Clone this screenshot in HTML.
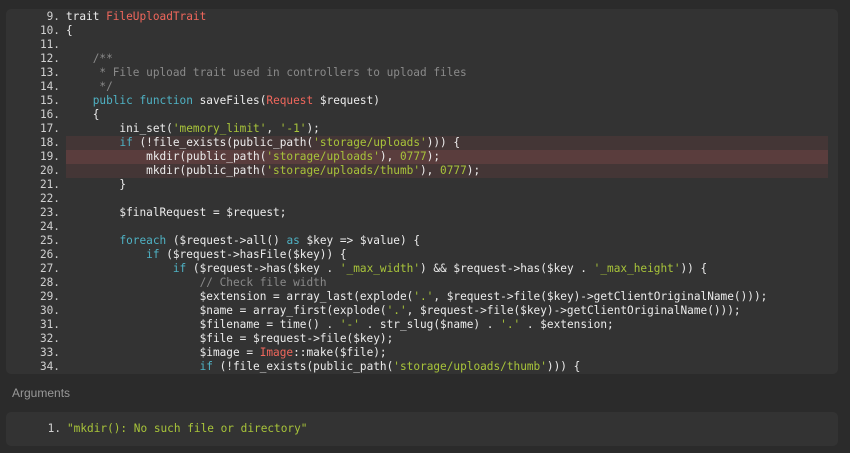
<!DOCTYPE html>
<html><head><style>
body{margin:0;width:850px;height:453px;background:#2b2b2b;overflow:hidden;font-family:"DejaVu Sans Mono",monospace;font-size:11.1px;color:#ececec}
.box{position:absolute;left:6px;top:9px;width:832px;height:365px;background:#333;border-radius:5px;overflow:hidden}
.l{position:absolute;left:0;height:14px;line-height:14px;white-space:pre;width:832px}
.n{position:absolute;left:0;width:54px;text-align:right;color:#d0d0d0}
.c{position:absolute;left:60px;width:762px;height:14px}
.h1 .c{background:#443636}.h2 .c{background:#5a3d3d}
.k{color:#4fb2c4}.s{color:#a8c43a}.t{color:#f0675c}.m{color:#8a8a8a}
.lab{position:absolute;left:12px;top:386px;color:#999;font-family:"Liberation Sans",sans-serif;font-size:12px}
.args{position:absolute;left:6px;top:412px;width:832px;height:34px;background:#333;border-radius:5px}
</style></head><body>
<div class="box">
<div class="l" style="top:1px"><span class="n"> 9.</span><span class="c">trait <span class="t">FileUploadTrait</span></span></div>
<div class="l" style="top:15px"><span class="n">10.</span><span class="c">{</span></div>
<div class="l" style="top:29px"><span class="n">11.</span><span class="c"></span></div>
<div class="l" style="top:43px"><span class="n">12.</span><span class="c">    <span class="m">/**</span></span></div>
<div class="l" style="top:57px"><span class="n">13.</span><span class="c"><span class="m">     * File upload trait used in controllers to upload files</span></span></div>
<div class="l" style="top:71px"><span class="n">14.</span><span class="c"><span class="m">     */</span></span></div>
<div class="l" style="top:85px"><span class="n">15.</span><span class="c">    <span class="k">public function</span> saveFiles(<span class="t">Request</span> $request)</span></div>
<div class="l" style="top:99px"><span class="n">16.</span><span class="c">    {</span></div>
<div class="l" style="top:113px"><span class="n">17.</span><span class="c">        ini_set(<span class="s">'memory_limit'</span>, <span class="s">'-1'</span>);</span></div>
<div class="l h1" style="top:127px"><span class="n">18.</span><span class="c">        <span class="k">if</span> (!file_exists(public_path(<span class="s">'storage/uploads'</span>))) {</span></div>
<div class="l h2" style="top:141px"><span class="n">19.</span><span class="c">            mkdir(public_path(<span class="s">'storage/uploads'</span>), <span class="s">0777</span>);</span></div>
<div class="l h1" style="top:155px"><span class="n">20.</span><span class="c">            mkdir(public_path(<span class="s">'storage/uploads/thumb'</span>), <span class="s">0777</span>);</span></div>
<div class="l" style="top:169px"><span class="n">21.</span><span class="c">        }</span></div>
<div class="l" style="top:183px"><span class="n">22.</span><span class="c"></span></div>
<div class="l" style="top:197px"><span class="n">23.</span><span class="c">        $finalRequest = $request;</span></div>
<div class="l" style="top:211px"><span class="n">24.</span><span class="c"></span></div>
<div class="l" style="top:225px"><span class="n">25.</span><span class="c">        <span class="k">foreach</span> ($request-&gt;all() <span class="k">as</span> $key =&gt; $value) {</span></div>
<div class="l" style="top:239px"><span class="n">26.</span><span class="c">            <span class="k">if</span> ($request-&gt;hasFile($key)) {</span></div>
<div class="l" style="top:253px"><span class="n">27.</span><span class="c">                <span class="k">if</span> ($request-&gt;has($key . <span class="s">'_max_width'</span>) &amp;&amp; $request-&gt;has($key . <span class="s">'_max_height'</span>)) {</span></div>
<div class="l" style="top:267px"><span class="n">28.</span><span class="c">                    <span class="m">// Check file width</span></span></div>
<div class="l" style="top:281px"><span class="n">29.</span><span class="c">                    $extension = array_last(explode(<span class="s">'.'</span>, $request-&gt;file($key)-&gt;getClientOriginalName()));</span></div>
<div class="l" style="top:295px"><span class="n">30.</span><span class="c">                    $name = array_first(explode(<span class="s">'.'</span>, $request-&gt;file($key)-&gt;getClientOriginalName()));</span></div>
<div class="l" style="top:309px"><span class="n">31.</span><span class="c">                    $filename = time() . <span class="s">'-'</span> . str_slug($name) . <span class="s">'.'</span> . $extension;</span></div>
<div class="l" style="top:323px"><span class="n">32.</span><span class="c">                    $file = $request-&gt;file($key);</span></div>
<div class="l" style="top:337px"><span class="n">33.</span><span class="c">                    $image = <span class="t">Image</span>::make($file);</span></div>
<div class="l" style="top:351px"><span class="n">34.</span><span class="c">                    <span class="k">if</span> (!file_exists(public_path(<span class="s">'storage/uploads/thumb'</span>))) {</span></div>
</div>
<div class="lab">Arguments</div>
<div class="args"><div class="l" style="top:10px"><span class="n" style="width:55px">1.</span><span class="c" style="left:61px"><span class="s">"mkdir(): No such file or directory"</span></span></div></div>
</body></html>
